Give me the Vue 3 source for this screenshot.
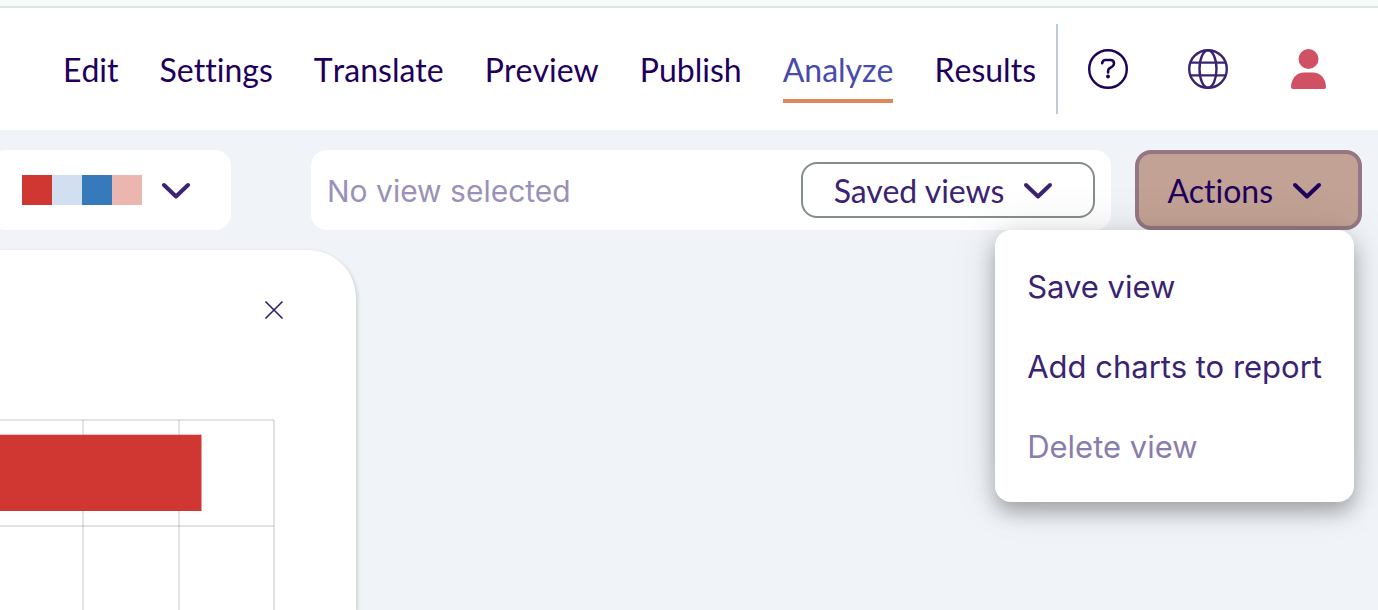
<script setup>
const tabs = ['Edit', 'Settings', 'Translate', 'Preview', 'Publish', 'Analyze', 'Results']
const activeTab = 'Analyze'
const palette = ['red', 'sky', 'blue', 'pink']
const actions = [
  { label: 'Save view', disabled: false },
  { label: 'Add charts to report', disabled: false },
  { label: 'Delete view', disabled: true },
]
</script>

<template>
  <div class="page">
    <div class="strip"></div>

    <header class="header">
      <nav class="tabs" aria-label="Survey">
        <a
          v-for="tab in tabs"
          :key="tab"
          href="#"
          class="tab"
          :class="{ active: tab === activeTab }"
          :aria-current="tab === activeTab ? 'page' : undefined"
        >{{ tab }}</a>
      </nav>
      <div class="tools">
        <button class="tool" type="button" aria-label="Help">
          <svg width="40" height="40" viewBox="0 0 40 40" fill="none" stroke="#1e005c" stroke-width="2.400">
            <circle cx="20" cy="20" r="18.800" />
            <path d="M14.200 14.200c0-2 1.400-3.200 3.400-3.200h4.800c2.200 0 3.600 1.500 3.600 3.500 0 1.600-.8 2.600-2.300 3.500l-2 1.200c-1.200.7-1.600 1.500-1.600 2.800v1.400" stroke-width="2.600" stroke-linecap="round" />
            <circle cx="20" cy="27.400" r="2" fill="#1e005c" stroke="none" />
          </svg>
        </button>
        <button class="tool" type="button" aria-label="Language">
          <svg width="40" height="40" viewBox="0 0 40 40" fill="none" stroke="#3a2472" stroke-width="2.400">
            <circle cx="20" cy="20" r="18.800" />
            <ellipse cx="20" cy="20" rx="8.500" ry="18.800" />
            <path d="M2 13.600h36M2 26.400h36" />
          </svg>
        </button>
        <button class="tool" type="button" aria-label="Account">
          <svg width="40" height="40" viewBox="0 0 40 40" fill="#d05163">
            <circle cx="20.500" cy="10" r="10" />
            <path d="M5 40a2 2 0 0 1-2-2c0-8.500 6-14.500 13-14.500h9c7 0 13 6 13 14.500a2 2 0 0 1-2 2z" />
          </svg>
        </button>
      </div>
    </header>

    <div class="toolbar">
      <button class="palette" type="button" aria-label="Chart colours">
        <span class="swatches">
          <span v-for="c in palette" :key="c" class="swatch" :class="c"></span>
        </span>
        <svg class="chevron" width="30" height="18" viewBox="0 0 30 18"><path d="M3 4l12 11.500L27 4" /></svg>
      </button>

      <div class="view-panel">
        <input class="view-name" type="text" placeholder="No view selected" aria-label="Selected view" readonly />
        <button class="saved" type="button" aria-haspopup="menu">
          Saved views
          <svg class="chevron" width="30" height="18" viewBox="0 0 30 18"><path d="M3 3l12 11.500L27 3" /></svg>
        </button>
      </div>

      <div class="actions">
        <button class="actions-button" type="button" aria-haspopup="menu" aria-expanded="true">
          Actions
          <svg class="chevron" width="30" height="18" viewBox="0 0 30 18"><path d="M3 3l12 11.500L27 3" /></svg>
        </button>
        <div class="menu" role="menu">
          <button
            v-for="item in actions"
            :key="item.label"
            class="menu-item"
            type="button"
            role="menuitem"
            :disabled="item.disabled"
          >{{ item.label }}</button>
        </div>
      </div>
    </div>

    <main class="card">
      <div class="card-head">
        <button class="close" type="button" aria-label="Close">
          <svg width="20" height="20" viewBox="0 0 20 20" fill="none" stroke="#2f1a6b" stroke-width="1.600">
            <path d="M1.500 1.500l17 17M18.500 1.500l-17 17" />
          </svg>
        </button>
      </div>
      <svg class="chart" width="276" height="192" viewBox="0 0 276 192" role="img" aria-label="Bar chart">
        <g stroke="#000" stroke-opacity=".11" stroke-width="2">
          <path d="M0 2h274" />
          <path d="M0 108h274" />
          <path d="M83 2v190" />
          <path d="M179 2v190" />
          <path d="M274 2v190" />
        </g>
        <rect x="0" y="16.700" width="201.500" height="76.300" fill="#d03732" />
      </svg>
    </main>
  </div>
</template>

<style>
body {
  margin: 0;
  overflow: hidden;
}
</style>

<style scoped>
.page {
  display: flex;
  flex-direction: column;
  min-height: 100vh;
  overflow: hidden;
  background: #f0f4f9;
  font-family: Lato, sans-serif;
  font-size: 32px;
  font-variant-ligatures: none;
  line-height: 40px;
  color: #1e005c;
}

.page * {
  box-sizing: border-box;
}

button,
input {
  padding: 0;
  border: 0;
  background: none;
  font: inherit;
  font-variant-ligatures: none;
  color: inherit;
  cursor: pointer;
}

svg {
  display: block;
  flex: none;
}

.strip {
  height: 8px;
  background: #f5fbf9;
  border-bottom: 2px solid #dce5e2;
}

.header {
  display: flex;
  justify-content: flex-end;
  align-items: center;
  height: 122px;
  padding-right: 50px;
  background: #fff;
}

.tabs {
  display: flex;
  gap: 41px;
  padding-right: 20px;
  font-kerning: none;
}

.tab {
  padding: 15px 0 9px;
  border-bottom: 4px solid transparent;
  color: #1e005c;
  text-decoration: none;
  white-space: nowrap;
}

.tab.active {
  color: #474aae;
  border-bottom-color: #de875b;
}

.tools {
  display: flex;
  align-items: center;
  gap: 60px;
  height: 90px;
  padding-left: 30px;
  border-left: 2px solid #bfccd9;
}

.toolbar {
  display: flex;
  height: 80px;
  margin: 20px 16px 20px -10px;
}

.palette {
  display: flex;
  align-items: center;
  gap: 19px;
  width: 241px;
  margin-right: 80px;
  padding-left: 32px;
  border-radius: 16px;
  background: #fff;
  color: #3a2472;
}

.swatches {
  display: flex;
}

.swatch {
  width: 30px;
  height: 30px;
}

.red { background: #d03732; }
.sky { background: #d2dff0; }
.blue { background: #367abb; }
.pink { background: #eab6af; }

.chevron {
  fill: none;
  stroke: currentColor;
  stroke-width: 4;
  stroke-linecap: round;
  stroke-linejoin: round;
}

.view-panel {
  display: flex;
  flex: 1;
  align-items: center;
  min-width: 0;
  margin-right: 24px;
  padding: 0 16px;
  border-radius: 16px;
  background: #fff;
}

.view-name {
  flex: 1;
  min-width: 0;
  padding-top: 2px;
  outline: 0;
  font-family: Inter, sans-serif;
  font-size: 30px;
}

.view-name::placeholder {
  color: #9b91b8;
  opacity: 1;
}

.saved {
  display: flex;
  align-items: center;
  gap: 19px;
  height: 56px;
  padding: 2px 40px 0 31px;
  border: 2px solid #858e8a;
  border-radius: 16px;
  color: #3a2472;
  white-space: nowrap;
}

.actions {
  position: relative;
}

.actions-button {
  display: flex;
  align-items: center;
  gap: 19px;
  height: 80px;
  padding: 2px 36px 0 28px;
  border: 4px solid #957783;
  border-radius: 16px;
  background: #c2a294;
}

.menu {
  position: absolute;
  top: 80px;
  right: 8px;
  display: flex;
  flex-direction: column;
  padding: 16px 0;
  border-radius: 16px;
  background: #fff;
  box-shadow: 0 10px 20px rgba(0, 8, 4, 0.3), 0 0 50px rgba(0, 8, 4, 0.1);
}

.menu-item {
  height: 80px;
  padding: 2px 32px 0;
  font-family: Inter, sans-serif;
  font-size: 31px;
  color: #3a2472;
  text-align: left;
  white-space: nowrap;
}

.menu-item:disabled {
  color: #897eab;
  cursor: default;
}

.card {
  flex: 1;
  width: 356px;
  border-top-right-radius: 48px;
  background: #fff;
  box-shadow: 1px 2px 4px rgba(0, 8, 4, 0.2);
}

.card-head {
  display: flex;
  justify-content: flex-end;
  height: 168px;
  padding: 50px 72px 0 0;
}

.close {
  height: 20px;
}
</style>
